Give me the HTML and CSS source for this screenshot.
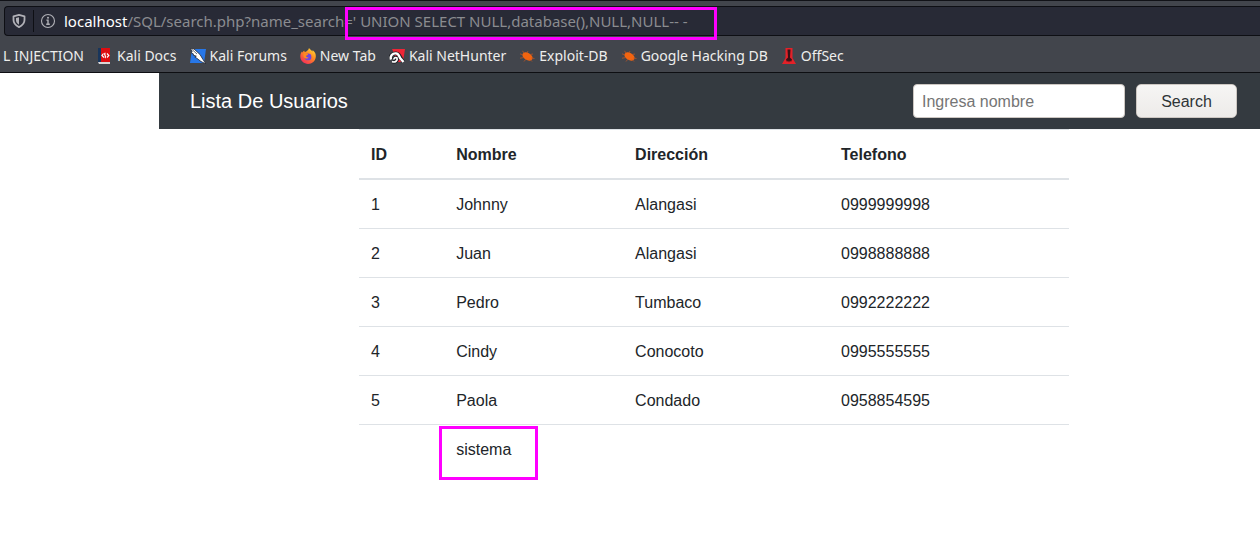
FILE: index.html
```html
<!DOCTYPE html>
<html lang="es">
<head>
<meta charset="utf-8">
<title>Lista De Usuarios</title>
<link rel="stylesheet" href="styles.css">
</head>
<body>
<header class="browser">
  <div class="address-bar">
    <svg class="shield" viewBox="0 0 16 16" aria-hidden="true"><path d="M8 1.900 13.500 3.300v3.800c0 3.100-2 5.400-5.500 7-3.500-1.600-5.500-3.900-5.500-7V3.300Z" fill="none" stroke="#b1b1b7" stroke-width="1.800" stroke-linejoin="round"/><path d="M8 4.200v7.600c-2-1.100-3-2.700-3-4.700V5Z" fill="#b1b1b7"/></svg>
    <span class="divider"></span>
    <svg class="info" viewBox="0 0 16 16" fill="none" stroke="#b1b1b7" aria-hidden="true"><circle cx="8" cy="8" r="6.500" stroke-width="1.100"/><path d="M6.400 7.100H8v4M6.200 11.300h3.600" stroke-width="1.400"/><circle cx="8" cy="4.800" r="1" fill="#b1b1b7" stroke="none"/></svg>
    <label class="host" for="url">localhost</label>
    <input class="url" id="url" type="text" value="/SQL/search.php?name_search=' UNION SELECT NULL,database(),NULL,NULL-- -" spellcheck="false">
    <span class="mark mark-url"></span>
  </div>
  <nav class="bookmarks" aria-label="Marcadores">
    <a class="bookmark bookmark-first" href="#">L INJECTION</a>
    <a class="bookmark" href="#"><svg viewBox="0 0 16 16" aria-hidden="true"><path d="M1 0h12v14H1Z" fill="#dd0c10"/><path d="M1 0h3v15H1Z" fill="#19365c"/><path d="M1 14h12v2H2Z" fill="#d8d5d5"/><path d="M6.500 5.500 5 7.500l2 2M8.500 5c-2.500 1 1.500 3.200-.5 5M10 5.500l1.800 2-1.800 2" fill="none" stroke="#fff" stroke-width="1.200"/></svg>Kali Docs</a>
    <a class="bookmark" href="#"><svg viewBox="0 0 16 16" aria-hidden="true"><path d="M2 1h14l-2 14H0Z" fill="#2777e8"/><path d="m0 0 4 1 6 5.500 3 5 3 4.500-5-2.500L6.500 10 4.800 9l1.500-.8L3 7l.5-1L1 4.500l1.200-.8Z" fill="#fff" stroke="#22252d" stroke-width=".8"/><path d="m1 .5 6 5.500" stroke="#30333b" stroke-width=".7"/></svg>Kali Forums</a>
    <a class="bookmark" href="#"><svg viewBox="0 0 16 16" aria-hidden="true"><defs><linearGradient id="fire" x1=".9" y1="0" x2=".2" y2="1"><stop stop-color="#ffe33b"/><stop offset=".45" stop-color="#ff8b20"/><stop offset="1" stop-color="#f5265e"/></linearGradient></defs><path d="M9 0c1 1.600 2.400 2.100 3.400 3.400.3-.4.2-1 .1-1.300C15 4 16 6.200 15.800 8.800 15.500 13 12 16 8 16S.3 12.800.3 8.600c0-2 .5-3.700 1.700-5 .2.600.3.800.5 1 .3-1 .9-1.700 1.700-2.200 0 .8.300 1.300.8 1.600C6.800 3.600 8.500 2 9 0Z" fill="url(#fire)"/><circle cx="8" cy="8.900" r="3.400" fill="#7045dd"/><path d="M3.500 5.500c2-.8 3.500-.2 4.700.7-.4 1-1.300 1-2.200 1.600.2 1.500 1.300 2 2.800 1.500-1 2-4.300 1.700-5.300-.8Z" fill="#ff8b20"/></svg>New Tab</a>
    <a class="bookmark" href="#"><svg viewBox="0 0 16 16" aria-hidden="true"><path d="M3 1h13l-2 13H9Z" fill="#ef2536"/><path d="M2 11C.5 7.500 3.500 5 7 5.200c3 .3 3.500 2.500 4.500 4.300L14.500 14M3 13.500c3 1.500 6-1 5-3.500-1.500-1-3 0-3.200 1.200" fill="none" stroke="#202226" stroke-width="3.600"/><path d="M2 11.500C.8 8 3.500 5 7 5.400c3 .3 3 3 4.300 4.800L14.500 14" fill="none" stroke="#fff" stroke-width="2.400"/><path d="M3 13.500c3 1.500 6-1 5-3.500-1.500-1-3 0-3.200 1.500" fill="none" stroke="#fff" stroke-width="1.700"/></svg>Kali NetHunter</a>
    <a class="bookmark" href="#"><svg viewBox="0 0 16 16" aria-hidden="true"><g id="bug"><ellipse cx="8.500" cy="8.500" rx="5.500" ry="3.600" transform="rotate(30 8.500 8.500)" fill="#f26410"/><path d="M4 7 1 5.800M5 5 3.500 2.800M8 5l1-2M11 6.500l3-.5M12.500 10l3 .5M11 11.500l2 2M7 11l-2 2.500M5 9.500l-4 .7" fill="none" stroke="#b65427" stroke-width=".8"/></g></svg>Exploit-DB</a>
    <a class="bookmark" href="#"><svg viewBox="0 0 16 16" aria-hidden="true"><use href="#bug"/></svg>Google Hacking DB</a>
    <a class="bookmark" href="#"><svg viewBox="0 0 16 16" aria-hidden="true"><path d="M4.500 0h7v10l3.500 6H1l3.500-6Z" fill="#e32128"/><path d="M6.500 1.500h3L9 9.500l2 2-1 2.500-1-1.500L8 14.500l-1-2L6 14l-1-2.500 2-2Z" fill="#371216"/></svg>OffSec</a>
  </nav>
</header>
<main class="page">
  <nav class="navbar">
    <a class="brand" href="#">Lista De Usuarios</a>
    <form class="search">
      <input class="search-input" type="text" placeholder="Ingresa nombre" aria-label="Ingresa nombre">
      <button class="search-button" type="submit">Search</button>
    </form>
  </nav>
  <div class="users">
    <table class="table">
      <colgroup><col class="col-id"><col class="col-name"><col class="col-address"><col></colgroup>
      <thead><tr><th>ID</th><th>Nombre</th><th>Dirección</th><th>Telefono</th></tr></thead>
      <tbody>
        <tr><td>1</td><td>Johnny</td><td>Alangasi</td><td>0999999998</td></tr>
        <tr><td>2</td><td>Juan</td><td>Alangasi</td><td>0998888888</td></tr>
        <tr><td>3</td><td>Pedro</td><td>Tumbaco</td><td>0992222222</td></tr>
        <tr><td>4</td><td>Cindy</td><td>Conocoto</td><td>0995555555</td></tr>
        <tr><td>5</td><td>Paola</td><td>Condado</td><td>0958854595</td></tr>
        <tr><td></td><td class="marked">sistema<span class="mark mark-cell"></span></td><td></td><td></td></tr>
      </tbody>
    </table>
  </div>
</main>
</body>
</html>
```
FILE: styles.css
```css
* { box-sizing: border-box; }

body {
  margin: 0;
  background: #fff;
  color: #212529;
  font: 16px/24px "Liberation Sans", Arial, sans-serif;
}

a { color: inherit; text-decoration: none; }

.browser {
  padding-top: 5px;
  background: #42454c;
  border-top: 1px solid #111217;
  border-bottom: 1px solid #0d0e12;
  color: #eeeeec;
  font: 15px/20px "Noto Sans", sans-serif;
}

.address-bar {
  position: relative;
  display: flex;
  align-items: center;
  height: 30px;
  margin-left: 4px;
  padding-left: 6px;
  background: #282a36;
  border: 1px solid #0e0f14;
  border-right: 0;
  border-radius: 4px 0 0 4px;
}

.shield, .info { flex: none; width: 16px; height: 16px; }
.divider { width: 1px; height: 22px; margin: 0 6px; background: #0e0f14; }
.host { margin-left: 8px; color: #fff; }

.url {
  flex: 1;
  min-width: 0;
  padding: 0;
  border: 0;
  outline: 0;
  background: none;
  color: #8b8c90;
  font: inherit;
}

.mark { position: absolute; border: 3px solid #f0f; pointer-events: none; }
.mark-url { left: 340px; top: 0; width: 372px; height: 33px; }
.mark-cell { left: -5px; top: 1px; width: 99px; height: 54px; }

.bookmarks {
  display: flex;
  align-items: center;
  gap: 13px;
  height: 36px;
  padding-top: 4px;
  font-size: 14px;
  white-space: nowrap;
}

.bookmark { display: flex; align-items: center; gap: 4px; }
.bookmark svg { width: 16px; height: 16px; }
.bookmark-first { width: 84px; justify-content: flex-end; }

.page { margin-left: 159px; }

.navbar {
  display: flex;
  align-items: center;
  justify-content: space-between;
  height: 56px;
  padding: 0 23px 0 31px;
  background: #343a40;
}

.brand { color: #fff; font-size: 20px; line-height: 30px; }
.search { display: flex; gap: 11px; }

.search-input {
  width: 212px;
  height: 34px;
  padding: 1px 8px 0;
  border: 1px solid #cdc7c2;
  border-radius: 4px;
  background: #fff;
  font: inherit;
}

.search-input::placeholder { color: #757575; }

.search-button {
  width: 101px;
  height: 34px;
  padding: 2px 6px 0;
  border: 1px solid #cdc7c2;
  border-radius: 5px;
  background: linear-gradient(#f6f5f4, #edebe9);
  color: #2e3436;
  font: inherit;
}

.users { padding: 0 191px 64px 200px; }

.table {
  width: 100%;
  table-layout: fixed;
  border-collapse: separate;
  border-spacing: 0;
}

.col-id { width: 12%; }
.col-name { width: 25.2%; }
.col-address { width: 29%; }

.table th, .table td {
  padding: 13px 12px 11px;
  border-bottom: 1px solid #dee2e6;
  text-align: left;
  vertical-align: top;
}

.table th {
  border-top: 1px solid #dee2e6;
  border-bottom-width: 2px;
}

.table tbody tr:last-child td { border-bottom: 0; }
.table .marked { position: relative; }
```
